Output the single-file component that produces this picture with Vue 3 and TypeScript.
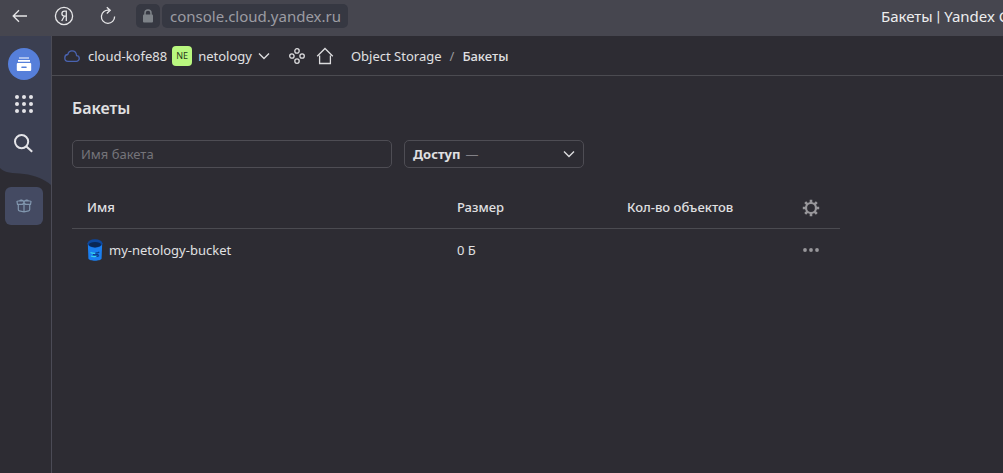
<script setup lang="ts">
import { ref } from 'vue'

interface Bucket {
  name: string
  size: string
  objects: string
}

const query = ref('')
const access = ref('')
const buckets: Bucket[] = [{ name: 'my-netology-bucket', size: '0 Б', objects: '' }]
const dots = [4, 11, 18]
</script>

<template>
  <div class="window">
    <div class="browser">
      <button class="tool" type="button" aria-label="Назад">
        <svg width="20" height="20" viewBox="0 0 20 20"><path d="M17 10H3.500M9 4.200L3.200 10L9 15.800" /></svg>
      </button>
      <button class="tool" type="button" aria-label="Яндекс">
        <svg width="20" height="20" viewBox="0 0 20 20">
          <circle cx="10" cy="10" r="8.600" />
          <path d="M12.300 15V5.200H10.700C8.900 5.200 7.900 6.300 7.900 7.800C7.900 9.300 8.800 10.200 10.500 10.200H12.300M10.300 10.300L7.700 15" />
        </svg>
      </button>
      <button class="tool" type="button" aria-label="Обновить">
        <svg width="20" height="20" viewBox="0 0 20 20"><path d="M11 4.200A6.600 6.600 0 1 0 16.600 10.500M8.800 1.200L12.200 4.300L8.800 7.400" /></svg>
      </button>
      <div class="address">
        <span class="lock">
          <svg width="12" height="14" viewBox="0 0 12 14">
            <rect x="1" y="5.500" width="10" height="8" rx="1" />
            <path d="M3 6V4a3 3 0 0 1 6 0V6" />
          </svg>
        </span>
        <span class="url">console.cloud.yandex.ru</span>
      </div>
      <span class="tab-title">Бакеты <span class="bar">|</span> Yandex Cloud</span>
    </div>

    <div class="body">
      <aside class="rail">
        <div class="rail-top">
          <a class="logo" href="#" aria-label="Object Storage">
            <svg width="16" height="16" viewBox="0 0 16 16">
              <path d="M3 1.400h10v1.200H3zM2 4h12v1.700H2z" />
              <path fill-rule="evenodd" d="M1.800 7h12.400a1 1 0 0 1 1 1v6a1 1 0 0 1-1 1H1.800a1 1 0 0 1-1-1V8a1 1 0 0 1 1-1zM6 10.600q-.8 0-.8.700t.8.700h4q.8 0 .8-.700t-.8-.700z" />
            </svg>
          </a>
          <button class="rail-btn" type="button" aria-label="Все сервисы">
            <svg width="22" height="22" viewBox="0 0 22 22">
              <template v-for="y in dots" :key="y">
                <circle v-for="x in dots" :key="x" :cx="x" :cy="y" r="2" />
              </template>
            </svg>
          </button>
          <button class="rail-btn search" type="button" aria-label="Поиск">
            <svg width="22" height="22" viewBox="0 0 22 22">
              <circle cx="8.600" cy="8.600" r="6.600" />
              <path d="M13.400 13.400L19.200 18.800" />
            </svg>
          </button>
        </div>
        <svg class="wave" viewBox="0 0 51 18" preserveAspectRatio="none">
          <path d="M0 0V1C5 6.500 12 5.600 24 7C35 8.300 44 12 51 18V0Z" />
        </svg>
        <button class="gift" type="button" aria-label="Бонусы">
          <svg width="16" height="14" viewBox="0 0 16 14">
            <path d="M1 2.500L2 2H14L15 2.500L14.500 5.300H9.500L8 3.500L6.500 5.300H1.500ZM2.300 5.500V10.500Q2.300 11.600 3.300 11.800L8 12.800L12.700 11.800Q13.700 11.600 13.700 10.500V5.500M8 3.500V12.800M8 3C7 1 4.500.6 3.500 1.800M8 3C9 1 11.500.6 12.500 1.800" />
          </svg>
        </button>
      </aside>

      <div class="content">
        <header class="header">
          <a class="crumb cloud" href="#">
            <svg width="16" height="12" viewBox="0 0 16 12">
              <path d="M4 11.300h8.300a2.800 2.800 0 0 0 .3-5.600C12.300 2.900 10.300.9 8 .9C5.700.9 4.300 2.400 3.800 4.500C2 4.600.8 6 .8 7.900C.8 9.900 2.200 11.300 4 11.300z" />
            </svg>
            cloud-kofe88
          </a>
          <button class="crumb folder" type="button">
            <span class="badge">NE</span>
            netology
            <svg class="chevron" width="12" height="8" viewBox="0 0 12 8"><path d="M1 1.500L6 6.500L11 1.500" /></svg>
          </button>
          <a class="icon-link services" href="#" aria-label="Сервисы">
            <svg width="16" height="16" viewBox="0 0 16 16">
              <circle cx="8" cy="2.900" r="2.200" /><circle cx="8" cy="13.100" r="2.200" />
              <circle cx="2.900" cy="8" r="2.200" /><circle cx="13.100" cy="8" r="2.200" />
            </svg>
          </a>
          <a class="icon-link home" href="#" aria-label="Главная">
            <svg width="18" height="18" viewBox="0 0 18 18"><path d="M1.200 9.200L9 1.500L16.800 9.200M3.600 8.500V16.500H14.400V8.500" /></svg>
          </a>
          <nav class="path" aria-label="Путь">
            <a href="#">Object Storage</a>
            <span class="slash">/</span>
            <a class="current" href="#">Бакеты</a>
          </nav>
        </header>

        <main class="main">
          <h1>Бакеты</h1>
          <div class="filters">
            <input v-model="query" class="field" type="text" placeholder="Имя бакета" aria-label="Имя бакета" />
            <div class="field access">
              <label for="access">Доступ</label>
              <select id="access" v-model="access">
                <option value="">—</option>
              </select>
              <svg class="chevron" width="12" height="8" viewBox="0 0 12 8"><path d="M1 1.500L6 6.500L11 1.500" /></svg>
            </div>
          </div>

          <table>
            <colgroup>
              <col class="c-name" /><col class="c-num" /><col class="c-num" /><col />
            </colgroup>
            <thead>
              <tr>
                <th>Имя</th>
                <th>Размер</th>
                <th>Кол-во объектов</th>
                <th class="act">
                  <button type="button" aria-label="Настройки">
                    <svg width="18" height="18" viewBox="0 0 18 18">
                      <circle class="ring" cx="9" cy="9" r="5" />
                      <path class="teeth" d="M9 4V.8M9 14v3.200M4 9H.8M14 9h3.200M5.500 5.500L3.200 3.200M12.500 12.500l2.300 2.300M5.500 12.500L3.200 14.800M12.500 5.500l2.300-2.300" />
                    </svg>
                  </button>
                </th>
              </tr>
            </thead>
            <tbody>
              <tr v-for="b in buckets" :key="b.name">
                <td>
                  <a class="bucket" href="#">
                    <svg width="16" height="22" viewBox="0 0 16 22">
                      <path fill="#1a7ff0" d="M.8 4H15.200L14.600 19.500C14 22.400 2 22.400 1.400 19.500Z" />
                      <ellipse cx="8" cy="4.400" rx="7.500" ry="4.200" fill="#0c479e" />
                      <ellipse cx="8" cy="5.700" rx="6" ry="2.700" fill="#0a2856" />
                      <path fill="none" stroke="#38d6e8" stroke-width="1.200" d="M3.500 13.500q2 1 4.500.800M4 17q3 1.200 5.500.300" />
                      <path fill="none" stroke="#0b3a85" stroke-width="1.200" d="M8.500 14.200q2.500-.300 3.800-1.200M6 15.700q2.500.400 5.500-.300M9.500 17.400q1.500-.300 2.500-1" />
                    </svg>
                    {{ b.name }}
                  </a>
                </td>
                <td>{{ b.size }}</td>
                <td>{{ b.objects }}</td>
                <td class="act">
                  <button type="button" aria-label="Действия">
                    <svg width="18" height="6" viewBox="0 0 18 6">
                      <circle cx="3" cy="3" r="1.900" /><circle cx="9" cy="3" r="1.900" /><circle cx="15" cy="3" r="1.900" />
                    </svg>
                  </button>
                </td>
              </tr>
            </tbody>
          </table>
        </main>
      </div>
    </div>
  </div>
</template>

<style>
body {
  margin: 0;
  background: #2d2c33;
}
</style>

<style scoped>
.window {
  display: flex;
  flex-direction: column;
  min-height: 100vh;
  overflow: hidden;
  background: #2d2c33;
  color: #e0e0e2;
  font: 13px/18px "Noto Sans", "Open Sans", sans-serif;
}
.window * {
  box-sizing: border-box;
}
svg {
  display: block;
  flex: none;
  fill: none;
}
a {
  color: inherit;
  text-decoration: none;
}
button {
  display: flex;
  align-items: center;
  justify-content: center;
  padding: 0;
  border: 0;
  background: none;
  color: inherit;
  font: inherit;
  cursor: pointer;
}
.browser {
  display: flex;
  align-items: center;
  height: 36px;
  padding: 0 0 4px 10px;
  background: #46464f;
  white-space: nowrap;
}
.tool {
  width: 20px;
  margin-right: 24px;
}
.tool svg {
  stroke: #e6e6e8;
  stroke-width: 1.3;
}
.address {
  display: flex;
  gap: 2px;
  margin-left: -6px;
}
.lock,
.url {
  display: flex;
  align-items: center;
  height: 24px;
  border-radius: 5px;
  background: #363842;
}
.lock {
  justify-content: center;
  width: 24px;
}
.lock rect {
  fill: #7d8288;
}
.lock path {
  stroke: #7d8288;
  stroke-width: 1.5;
}
.url {
  padding: 0 7px 0 8px;
  color: #9c9ca3;
  font-size: 15px;
}
.tab-title {
  flex: none;
  width: 122px;
  margin-left: auto;
  overflow: hidden;
  color: #ededee;
  font-size: 15px;
}
.bar {
  font-family: Roboto, sans-serif;
}
.body {
  display: flex;
  flex: 1;
}
.rail {
  flex: none;
  width: 52px;
  border-right: 1px solid #4b4b56;
}
.rail-top {
  display: flex;
  flex-direction: column;
  padding: 12px 8px 3px;
  background: #3b3f51;
}
.logo {
  display: flex;
  align-items: center;
  justify-content: center;
  width: 32px;
  height: 32px;
  margin-bottom: 4px;
  border-radius: 50%;
  background: #567fda;
}
.logo svg {
  fill: #fff;
}
.rail-btn {
  width: 32px;
  height: 40px;
}
.rail-btn svg {
  fill: #e4e4e8;
}
.search svg {
  fill: none;
  stroke: #e4e4e8;
  stroke-width: 2;
}
.wave {
  width: 100%;
  height: 18px;
}
.wave path {
  fill: #3b3f51;
}
.gift {
  width: 38px;
  height: 38px;
  margin: 2px 0 0 5px;
  border-radius: 6px;
  background: #444a62;
}
.gift svg {
  stroke: #8196ae;
  stroke-width: 1.2;
}
.content {
  flex: 1;
  min-width: 0;
}
.header {
  display: flex;
  align-items: center;
  height: 40px;
  padding-left: 12px;
  border-bottom: 1px solid #4b4b51;
  white-space: nowrap;
}
.crumb {
  display: flex;
  align-items: center;
  gap: 8px;
}
.cloud svg {
  stroke: #4a63b0;
  stroke-width: 1.3;
}
.folder {
  gap: 6px;
  margin-left: 5px;
}
.badge {
  width: 20px;
  height: 20px;
  border-radius: 4px;
  background: #b9f77f;
  color: #2b3a1c;
  font-size: 9px;
  line-height: 20px;
  text-align: center;
}
.chevron {
  stroke: #dcdcde;
  stroke-width: 1.4;
}
.icon-link svg {
  stroke: #dcdcde;
  stroke-width: 1.3;
}
.services {
  margin-left: 19px;
}
.home {
  margin-left: 11px;
}
.path {
  display: flex;
  gap: 8px;
  margin-left: 17px;
}
.slash {
  color: #98989c;
}
.current {
  font-weight: 500;
}
.main {
  padding: 20px;
}
h1 {
  margin: 0;
  font-size: 16px;
  font-weight: 600;
  line-height: 24px;
}
.filters {
  display: flex;
  gap: 12px;
  margin: 20px 0;
}
.field {
  width: 320px;
  height: 28px;
  padding: 0 8px;
  border: 1px solid #4e4d54;
  border-radius: 5px;
  background: none;
  color: inherit;
  font: inherit;
}
.field::placeholder {
  color: #75747a;
  opacity: 1;
}
.access {
  display: flex;
  align-items: center;
  width: 180px;
}
.access label {
  font-weight: 700;
}
.access select {
  flex: 1;
  min-width: 0;
  padding: 0 0 0 5px;
  border: 0;
  background: none;
  color: #828187;
  font: inherit;
  appearance: none;
}
table {
  width: 100%;
  max-width: 768px;
  border-collapse: collapse;
  table-layout: fixed;
}
.c-name {
  width: 370px;
}
.c-num {
  width: 170px;
}
th,
td {
  height: 40px;
  padding: 0 15px;
  text-align: left;
  white-space: nowrap;
}
th {
  padding-bottom: 2px;
  border-bottom: 1px solid #4b4b51;
  font-weight: 500;
}
td {
  height: 44px;
}
.act {
  padding: 0;
}
.act button {
  width: 28px;
  height: 28px;
  margin: 0 auto;
}
.act svg {
  fill: #98979b;
}
.act .ring {
  fill: none;
  stroke: #98979b;
  stroke-width: 2.2;
}
.act .teeth {
  stroke: #98979b;
  stroke-width: 2.6;
}
.bucket {
  display: flex;
  align-items: center;
  gap: 6px;
}
</style>
